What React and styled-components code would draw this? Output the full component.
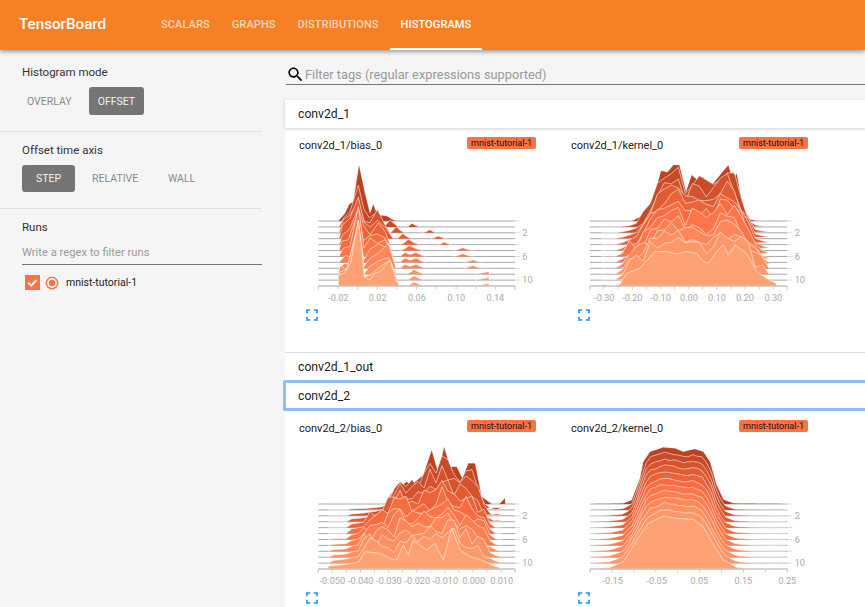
import React from 'react'
import styled, { createGlobalStyle } from 'styled-components'

const Global = createGlobalStyle`
  html, body { margin: 0; padding: 0; height: 100%; overflow: hidden; background: #f5f5f5; }
  body { font-family: Roboto, "Liberation Sans", sans-serif; }
  * { box-sizing: border-box; }
`

const Page = styled.div`
  width: 865px;
  height: 607px;
  overflow: hidden;
  display: flex;
  flex-direction: column;
`
const Header = styled.header`
  height: 50px;
  flex: none;
  display: flex;
  background: #f58025;
  box-shadow: 0 2px 4px rgba(0, 0, 0, 0.35);
  position: relative;
  z-index: 2;
`
const Logo = styled.div`
  width: 150px;
  padding-left: 19px;
  line-height: 49px;
  font-size: 15.2px;
  font-weight: 500;
  color: #fff;
`
const Tab = styled.a`
  height: 50px;
  padding: 0 11px;
  line-height: 49px;
  font-size: 11px;
  font-weight: 500;
  letter-spacing: 0.1px;
  color: ${({ $active }) => ($active ? '#fff' : 'rgba(255,255,255,0.68)')};
  border-bottom: 2px solid ${({ $active }) => ($active ? '#fff' : 'transparent')};
`
const Body = styled.div`
  flex: 1;
  display: flex;
  min-height: 0;
`
const Sidebar = styled.aside`
  width: 262px;
  flex: none;
`
const Section = styled.section`
  height: ${({ $h }) => $h}px;
  padding: ${({ $top }) => $top}px 0 0 22px;
  border-bottom: ${({ $last }) => ($last ? 'none' : '1px solid #e0e0e0')};
`
const Label = styled.div`
  font-size: 11.5px;
  line-height: 14px;
  color: #333;
`
const Toggles = styled.div`
  display: flex;
  gap: 8px;
  margin: 8px 0 0 ${({ $inset }) => $inset}px;
`
const Toggle = styled.button`
  height: ${({ $h }) => $h}px;
  min-width: 53px;
  padding: 0 9px;
  border: 0;
  border-radius: 3px;
  font-family: inherit;
  font-size: 10.5px;
  background: ${({ $on }) => ($on ? '#757575' : 'transparent')};
  color: ${({ $on }) => ($on ? '#f2f2f2' : '#8a8a8a')};
`
const RunFilter = styled.input`
  display: block;
  width: 240px;
  height: 24px;
  margin-top: 7px;
  padding: 0;
  border: 0;
  border-bottom: 1px solid #757575;
  outline: 0;
  background: transparent;
  font-family: inherit;
  font-size: 11.2px;
  &::placeholder { color: #9a9a9a; opacity: 1; }
`
const RunRow = styled.div`
  display: flex;
  align-items: center;
  margin: 10px 0 0 3px;
  font-size: 10.5px;
  color: #222;
`
const Main = styled.main`
  flex: 1;
  min-width: 0;
  padding: 15px 0 0 23px;
`
const Search = styled.div`
  display: flex;
  align-items: center;
  height: 20px;
  margin: 0 0 15px 1px;
  border-bottom: 1px solid #757575;
`
const SearchInput = styled.input`
  flex: 1;
  height: 19px;
  padding: 0;
  border: 0;
  outline: 0;
  background: transparent;
  font-family: inherit;
  font-size: 12.8px;
  &::placeholder { color: #9a9a9a; opacity: 1; }
`
const PanelTitle = styled.div`
  height: ${({ $h }) => $h}px;
  padding-left: 13px;
  display: flex;
  align-items: center;
  background: #fff;
  font-size: 12.2px;
  color: #212121;
  border-top: ${({ $line }) => ($line ? '1px solid #ddd' : 'none')};
  box-shadow: ${({ $shadow }) => ($shadow ? '0 1px 3px rgba(0,0,0,0.2)' : 'none')};
  position: relative;
  ${({ $focus }) => $focus && `
    margin-left: -2px;
    padding-left: 12px;
    border: 3px solid #90bef3;
    border-right: 0;
    border-radius: 2px 0 0 2px;
  `}
`
const PanelBody = styled.div`
  height: ${({ $h }) => $h}px;
  display: flex;
  padding-left: 5px;
  background: #fff;
`
const Card = styled.div`
  width: 272px;
  flex: none;
`
const CardHead = styled.div`
  height: 32px;
  padding: 9px 26px 0 9px;
  display: flex;
  justify-content: space-between;
  align-items: flex-start;
`
const CardTitle = styled.div`
  font-size: 11px;
  line-height: 17px;
  color: #212121;
`
const Tag = styled.span`
  height: 12px;
  padding: 0 4px;
  border-radius: 2px;
  background: #ff7043;
  font-size: 9px;
  line-height: 12px;
  color: #111;
`
const ChartSvg = styled.svg`
  display: block;
`
const AxisText = styled.text`
  font-family: Roboto, sans-serif;
  font-size: 27.5px;
  fill: #aaa;
`
const ExpandIcon = styled.svg`
  display: block;
  margin-left: 12px;
  fill: #2196f3;
`

const ROWS = 12
const STEP = 17.73

const hex = (c) => [1, 3, 5].map((n) => parseInt(c.slice(n, n + 2), 16))
const mix = (a, b, t) => {
  const pa = hex(a)
  const pb = hex(b)
  return `rgb(${pa.map((v, i) => Math.round(v + (pb[i] - v) * t)).join(',')})`
}
const rowColor = (i) => {
  const t = i / (ROWS - 1)
  return t < 0.5 ? mix('#bd4120', '#ff7043', t * 2) : mix('#ff7043', '#ffa273', (t - 0.5) * 2)
}
const noise = (a, b) => {
  const s = Math.sin(a * 127.1 + b * 311.7) * 43758.5453
  return s - Math.floor(s) - 0.5
}
const at = (prof, x) => {
  if (x <= prof[0][0] || x >= prof[prof.length - 1][0]) return 0
  for (let k = 1; k < prof.length; k++) {
    if (x <= prof[k][0]) {
      const [x0, y0] = prof[k - 1]
      const [x1, y1] = prof[k]
      return y0 + ((y1 - y0) * (x - x0)) / (x1 - x0)
    }
  }
  return 0
}
// build every row by blending the back and the front silhouette, through an optional middle one
const blend = (back, front, from, to, step, jitter, bulge = 0, middle = null) => {
  const grid = []
  for (let x = from; x <= to; x += step) grid.push(x)
  return Array.from({ length: ROWS }, (_, i) => {
    // the key row of a silhouette keeps its own corners, so peaks are not sampled away
    const own = i === 0 ? back : i === ROWS - 1 ? front : []
    const xs = [...new Set([...grid, ...own.map((p) => p[0])])].sort((a, b) => a - b)
    const pts = xs.map((x) => {
      let h
      if (middle) {
        const m = at(middle, x)
        h = i <= 5
          ? at(back, x) + ((m - at(back, x)) * i) / 5
          : m + ((at(front, x) - m) * (i - 5)) / 6
      } else {
        const t = i / (ROWS - 1)
        h = at(back, x) * (1 - t) + at(front, x) * t
      }
      if (i > 0 && i < ROWS - 1 && h > 22) h += noise(x, i) * jitter + bulge
      return [x, Math.max(0, h)]
    })
    return [pts]
  })
}

const bump = (x0, xc, x1, h) => [
  [x0, 0], [(x0 + xc) / 2, h * 0.35], [xc, h], [(xc + x1) / 2, h * 0.35], [x1, 0],
]
const humps = (h) => [
  [330, 0], [345, h], [360, h * 0.5], [378, h], [395, h * 0.3], [408, 0],
]
const edge = (h) => [[555, 0], [597, h], [597, 0]]

const biasOne = [
  [[[145, 0], [165, 23], [178, 51], [190, 58], [207, 168], [225, 83], [240, 23], [250, 51], [262, 18], [290, 15], [310, 3], [318, 0]]],
  [[[147, 0], [162, 28], [180, 46], [205, 125], [222, 52], [238, 28], [252, 38], [270, 22], [288, 0]], [[282, 0], [300, 21], [325, 0]], bump(350, 366, 390, 11)],
  [[[147, 0], [160, 40], [178, 52], [205, 90], [222, 35], [240, 30], [262, 70], [282, 30], [300, 0]], bump(300, 318, 345, 19), bump(395, 420, 440, 9)],
  [[[147, 0], [158, 42], [180, 62], [205, 125], [222, 50], [240, 35], [262, 55], [285, 35], [310, 0]], bump(320, 338, 365, 16), bump(420, 445, 470, 8)],
  [[[147, 0], [158, 30], [178, 45], [205, 110], [222, 55], [240, 30], [265, 65], [285, 40], [300, 0]], bump(330, 355, 390, 16), bump(445, 462, 485, 8)],
  [[[147, 0], [155, 28], [175, 32], [205, 120], [220, 30], [240, 45], [262, 50], [285, 38], [305, 0]], bump(330, 358, 400, 15), bump(490, 518, 550, 8)],
  [[[147, 0], [160, 25], [180, 30], [205, 150], [222, 25], [240, 55], [262, 40], [285, 50], [310, 0]], humps(12), bump(490, 518, 550, 8)],
  [[[147, 0], [165, 20], [180, 18], [205, 120], [222, 8], [240, 40], [265, 55], [290, 45], [315, 0]], humps(13), bump(520, 548, 580, 7)],
  [[[147, 0], [165, 15], [180, 10], [205, 130], [222, 5], [240, 30], [265, 45], [295, 75], [318, 0]], humps(12), bump(520, 548, 580, 8)],
  [[[145, 0], [150, 25], [170, 15], [205, 150], [222, 0], [235, 20], [265, 40], [295, 50], [320, 0]], bump(348, 372, 405, 14), edge(8)],
  [[[145, 0], [150, 25], [180, 35], [205, 180], [222, 10], [240, 15], [270, 40], [300, 60], [322, 0]], bump(348, 372, 405, 13), edge(8)],
  [[[145, 0], [145, 32], [165, 40], [182, 70], [205, 198], [215, 115], [223, 28], [240, 18], [252, 38], [270, 43], [300, 78], [318, 18], [330, 0]], bump(350, 372, 405, 13), edge(8)],
]

const kernelOne = blend(
  [[215, 0], [245, 15], [270, 48], [285, 83], [303, 151], [322, 146], [340, 168], [358, 168], [378, 88], [395, 138], [412, 123], [430, 131], [450, 101], [480, 138], [505, 168], [518, 123], [530, 143], [548, 43], [570, 5], [590, 0]],
  [[124, 0], [125, 5], [160, 0], [180, 6], [200, 38], [240, 53], [262, 78], [285, 103], [320, 103], [350, 96], [380, 103], [410, 98], [430, 73], [445, 68], [470, 103], [490, 123], [505, 93], [525, 123], [560, 98], [590, 43], [620, 23], [648, 8], [649, 0]],
  124, 648, 21, 42, 12,
)
const biasTwo = blend(
  [[285, 0], [305, 32], [350, 67], [365, 57], [400, 87], [425, 162], [445, 92], [462, 172], [480, 112], [500, 112], [517, 77], [535, 122], [555, 122], [575, 22], [605, 0], [628, 0], [645, 18], [646, 0]],
  [[114, 0], [115, 9], [150, 12], [205, 20], [225, 52], [270, 47], [300, 32], [320, 27], [340, 72], [355, 42], [370, 87], [410, 57], [435, 77], [460, 27], [485, 122], [510, 57], [540, 37], [575, 27], [605, 12], [640, 0]],
  114, 646, 18, 44, 8,
  [[168, 0], [172, 12], [220, 20], [270, 40], [300, 70], [335, 110], [355, 70], [400, 95], [425, 60], [462, 130], [490, 60], [520, 90], [560, 50], [590, 30], [608, 0]],
)
const kernelTwo = blend(
  [[90, 0], [190, 2], [215, 12], [240, 77], [250, 127], [270, 157], [310, 170], [345, 167], [370, 157], [405, 165], [430, 157], [450, 127], [470, 57], [490, 14], [520, 2], [680, 0]],
  [[90, 0], [150, 5], [190, 22], [240, 102], [265, 137], [310, 159], [350, 152], [400, 149], [430, 127], [455, 82], [490, 27], [530, 5], [580, 0]],
  90, 680, 14, 5, 2,
)

const charts = {
  biasOne: {
    rows: biasOne, left: 85, right: 675, tickStep: 59,
    labels: [['-0.02', 145], ['0.02', 263], ['0.06', 381], ['0.10', 499], ['0.14', 616]],
  },
  kernelOne: {
    rows: kernelOne, left: 90, right: 682, tickStep: 42.29,
    labels: [['-0.30', 133], ['-0.20', 217], ['-0.10', 302], ['0.00', 387], ['0.10', 471], ['0.20', 555], ['0.30', 640]],
  },
  biasTwo: {
    rows: biasTwo, left: 85, right: 675, tickStep: 42.15,
    labels: [['-0.050', 127], ['-0.040', 212], ['-0.030', 297], ['-0.020', 382], ['-0.010', 466], ['0.000', 551], ['0.010', 635]],
  },
  kernelTwo: {
    rows: kernelTwo, left: 90, right: 682, tickStep: 65.8,
    labels: [['-0.15', 158], ['-0.05', 290], ['0.05', 418], ['0.15', 550], ['0.25', 682]],
  },
}

const Histogram = ({ name, shift }) => {
  const { rows, left, right, tickStep, labels } = charts[name]
  const ticks = []
  for (let x = left; x <= right + 1; x += tickStep) ticks.push(x)
  const base = 273
  const bottom = base + STEP * (ROWS - 1)
  return (
    <ChartSvg width="260" height="145" viewBox={`${shift} 90 780 435`}>
      {rows.map((_, i) => (
        <line key={i} x1={left} x2={right} y1={base + STEP * i} y2={base + STEP * i} stroke="#a8a8a8" strokeWidth="3" />
      ))}
      {rows.map((_, i) => i % 2 === 0 && (
        <line key={i} x1={right} x2={right + 15} y1={base + STEP * i} y2={base + STEP * i} stroke="#ddd" strokeWidth="3" />
      ))}
      {rows.map((segments, i) => segments.map((seg, s) => {
        const y0 = base + STEP * i
        const d = seg.map(([x, h], k) => `${k ? 'L' : 'M'}${x} ${(y0 - h).toFixed(1)}`).join('')
        return <path key={`${i}-${s}`} d={d} fill={rowColor(i)} stroke="#fff" strokeOpacity={i === 0 ? 0.15 : 0.55} strokeWidth="3" />
      }))}
      <path d={`M${left} ${bottom + 10}V${bottom}H${right}V${bottom + 10}`} fill="none" stroke="#ccc" strokeWidth="3" />
      {ticks.map((x) => (
        <line key={x} x1={x} x2={x} y1={bottom} y2={bottom + 10} stroke="#ccc" strokeWidth="3" />
      ))}
      {labels.map(([text, x]) => (
        <AxisText key={text} x={x} y={bottom + 46} textAnchor="middle">{text}</AxisText>
      ))}
      {[2, 6, 10].map((n) => (
        <AxisText key={n} x={right + 22} y={base + STEP * n + 10}>{n}</AxisText>
      ))}
    </ChartSvg>
  )
}

const ChartCard = ({ title, chart, shift }) => (
  <Card>
    <CardHead>
      <CardTitle>{title}</CardTitle>
      <Tag>mnist-tutorial-1</Tag>
    </CardHead>
    <Histogram name={chart} shift={shift} />
    <ExpandIcon width="20" height="20" viewBox="0 0 24 24">
      <path d="M7 14H5v5h5v-2H7v-3zm-2-4h2V7h3V5H5v5zm12 7h-3v2h5v-5h-2v3zM14 5v2h3v3h2V5h-5z" />
    </ExpandIcon>
  </Card>
)

export default function App() {
  return (
    <Page>
      <Global />
      <Header>
        <Logo>TensorBoard</Logo>
        <Tab>SCALARS</Tab>
        <Tab>GRAPHS</Tab>
        <Tab>DISTRIBUTIONS</Tab>
        <Tab $active>HISTOGRAMS</Tab>
      </Header>
      <Body>
        <Sidebar>
          <Section $h={82} $top={15}>
            <Label>Histogram mode</Label>
            <Toggles $inset={-4}>
              <Toggle $h={28}>OVERLAY</Toggle>
              <Toggle $h={28} $on>OFFSET</Toggle>
            </Toggles>
          </Section>
          <Section $h={77} $top={11}>
            <Label>Offset time axis</Label>
            <Toggles $inset={0}>
              <Toggle $h={27} $on>STEP</Toggle>
              <Toggle $h={27}>RELATIVE</Toggle>
              <Toggle $h={27}>WALL</Toggle>
            </Toggles>
          </Section>
          <Section $h={120} $top={11} $last>
            <Label>Runs</Label>
            <RunFilter placeholder="Write a regex to filter runs" />
            <RunRow>
              <svg width="15" height="15" viewBox="0 0 15 15">
                <rect width="15" height="15" fill="#ff7043" />
                <path d="M3.2 7.6l3 3 5.4-5.6" fill="none" stroke="#fff" strokeWidth="2" />
              </svg>
              <svg width="14" height="14" viewBox="0 0 14 14" style={{ margin: '0 7px 0 5px' }}>
                <circle cx="7" cy="7" r="5.7" fill="none" stroke="#ff7043" strokeWidth="1.4" />
                <circle cx="7" cy="7" r="3.2" fill="#ff7043" />
              </svg>
              mnist-tutorial-1
            </RunRow>
          </Section>
        </Sidebar>
        <Main>
          <Search>
            <svg width="19" height="19" viewBox="0 0 24 24">
              <path d="M15.5 14h-.79l-.28-.27C15.41 12.59 16 11.11 16 9.5 16 5.91 13.09 3 9.5 3S3 5.91 3 9.5 5.91 16 9.5 16c1.61 0 3.09-.59 4.23-1.57l.27.28v.79l5 4.99L20.49 19l-4.99-5zm-6 0C7.01 14 5 11.99 5 9.5S7.01 5 9.5 5 14 7.01 14 9.5 11.99 14 9.5 14z" />
            </svg>
            <SearchInput placeholder="Filter tags (regular expressions supported)" />
          </Search>
          <PanelTitle $h={28} $shadow>conv2d_1</PanelTitle>
          <PanelBody $h={224}>
            <ChartCard title="conv2d_1/bias_0" chart="biasOne" shift={0} />
            <ChartCard title="conv2d_1/kernel_0" chart="kernelOne" shift={6} />
          </PanelBody>
          <PanelTitle $h={28} $line>conv2d_1_out</PanelTitle>
          <PanelTitle $h={31} $focus>conv2d_2</PanelTitle>
          <PanelBody $h={224}>
            <ChartCard title="conv2d_2/bias_0" chart="biasTwo" shift={0} />
            <ChartCard title="conv2d_2/kernel_0" chart="kernelTwo" shift={6} />
          </PanelBody>
        </Main>
      </Body>
    </Page>
  )
}
